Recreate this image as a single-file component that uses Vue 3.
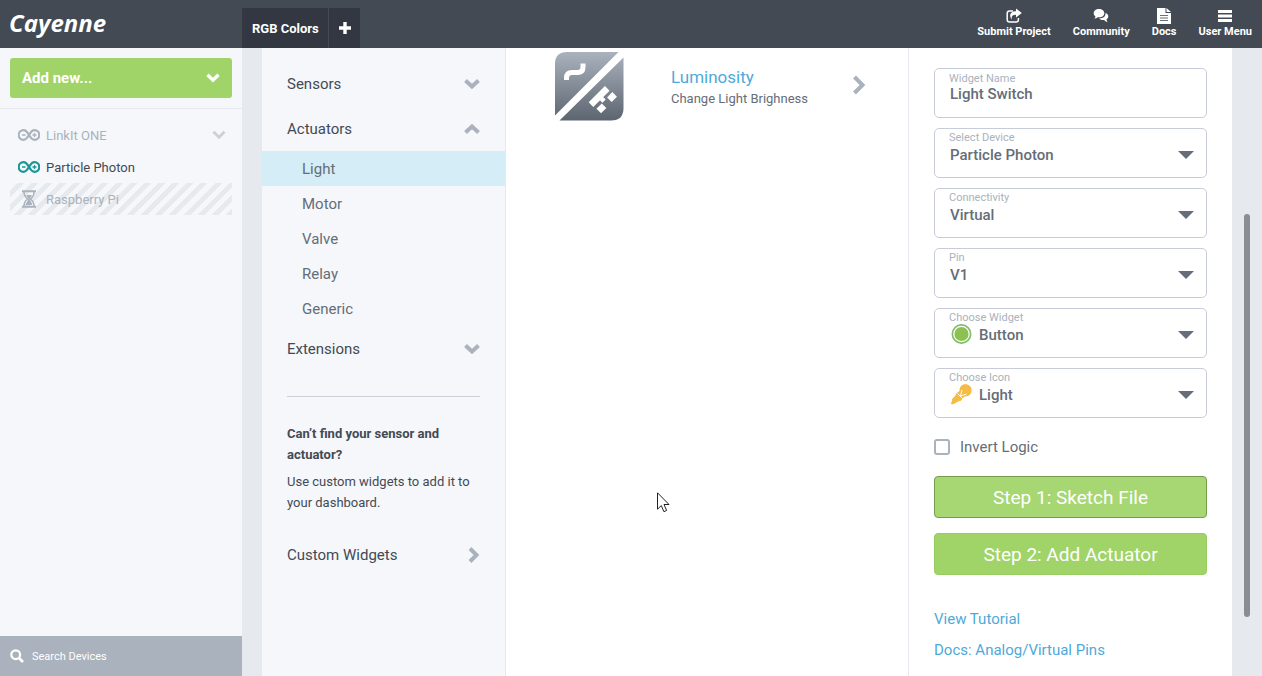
<script setup>
import { ref } from 'vue'

const devices = [
  { name: 'LinkIt ONE', icon: 'board', state: 'idle', expandable: true },
  { name: 'Particle Photon', icon: 'board', state: 'online' },
  { name: 'Raspberry Pi', icon: 'hourglass', state: 'pending' }
]
const actuators = ['Light', 'Motor', 'Valve', 'Relay', 'Generic']
const selected = ref('Light')
const widgetName = ref('Light Switch')
const invert = ref(false)
const fields = [
  { id: 'device', label: 'Select Device', options: ['Particle Photon', 'LinkIt ONE'] },
  { id: 'connectivity', label: 'Connectivity', options: ['Virtual', 'Digital'] },
  { id: 'pin', label: 'Pin', options: ['V1', 'V2'] },
  { id: 'widget', label: 'Choose Widget', options: ['Button'], icon: 'button' },
  { id: 'icon', label: 'Choose Icon', options: ['Light'], icon: 'bulb' }
]
</script>

<template>
  <div class="app">
    <header class="topbar">
      <div class="brand">Cayenne</div>
      <div class="tabs">
        <button class="tab">RGB Colors</button>
        <button class="tab add" aria-label="Add project">
          <svg width="12" height="12" viewBox="0 0 12 12"><path d="M4.3 0h3.4v4.3H12v3.4H7.7V12H4.3V7.7H0V4.3h4.3z" fill="#fff" /></svg>
        </button>
      </div>
      <nav class="links">
        <a href="#">
          <svg width="16" height="16" viewBox="0 0 16 16"><path d="M7 3H3.6Q1.2 3 1.2 5.300v6.400Q1.200 14 3.600 14h6.400q2.400 0 2.400-2.300V10" fill="none" stroke="#fff" stroke-width="1.500" /><path d="M10 .5 15.800 5 10 9.500V6.800C6.500 6.800 5.200 8 5.800 11.500 2.500 7 4.500 3.200 10 3.200z" fill="#fff" /></svg>
          <span>Submit Project</span>
        </a>
        <a href="#">
          <svg width="16" height="16" viewBox="0 0 16 16"><path d="M6 1c3.100 0 5.300 1.800 5.300 4.200S9.100 9.300 6 9.300l-1.200-.1C3.800 10 2.700 10.400 1.300 10.400c.7-.6 1.100-1.200 1.200-2C1.300 7.600.7 6.500.7 5.200.7 2.800 2.900 1 6 1z" fill="#fff" /><path d="M12.400 4.700c1.700.7 2.900 2 2.900 3.600 0 1.300-.7 2.300-1.800 3.100.1 1 .5 1.900 1.200 2.600-1.500-.1-2.700-.8-3.500-2-2 .2-3.900-.3-5-1.600 4.200 0 6.800-2.200 6.200-5.700z" fill="#fff" /></svg>
          <span>Community</span>
        </a>
        <a href="#">
          <svg width="16" height="16" viewBox="0 0 16 16"><path d="M1 0h8.500v5H15v11H1z" fill="#fff" /><path d="M10.500 0 15 4h-4.500z" fill="#fff" /><path d="M4 7.500h8M4 10h8M4 12.500h8" stroke="#69717b" stroke-width="1" /></svg>
          <span>Docs</span>
        </a>
        <a href="#">
          <svg width="16" height="16" viewBox="0 0 16 16"><path d="M1 3.500h14M1 8h14M1 12.500h14" stroke="#fff" stroke-width="3" /></svg>
          <span>User Menu</span>
        </a>
      </nav>
    </header>

    <div class="body">
      <aside class="sidebar">
        <div class="addbox">
          <button class="addnew">
            <span>Add new...</span>
            <svg width="14" height="10" viewBox="0 0 14 10"><path d="M1.500 1.800 7 7.200l5.500-5.400" fill="none" stroke="#fff" stroke-width="3.400" /></svg>
          </button>
        </div>
        <ul class="devices">
          <li v-for="d in devices" :key="d.name" :class="d.state">
            <svg v-if="d.icon === 'board'" width="22" height="12" viewBox="0 0 22 12">
              <path d="M11 6C9 2.600 7.500 1.200 5.500 1.200a4.600 4.600 0 0 0 0 9.600C7.500 10.800 9 9.400 11 6s3.500-4.800 5.500-4.800a4.600 4.600 0 0 1 0 9.600C14.500 10.800 13 9.400 11 6z" fill="none" stroke="currentColor" stroke-width="2.200" />
              <path d="M4 6h3.500M14.500 6h4M16.500 4v4" stroke="currentColor" stroke-width="1.300" />
            </svg>
            <svg v-else width="22" height="18" viewBox="0 0 22 18">
              <path d="M4 1.200h14M4 16.800h14" stroke="currentColor" stroke-width="2" />
              <path d="M6 2c0 4 1.500 5.500 3.700 7C7.500 10.500 6 12 6 16M16 2c0 4-1.500 5.500-3.700 7 2.200 1.500 3.700 3 3.700 7" fill="none" stroke="currentColor" stroke-width="1.500" />
              <path d="M8 5h6l-2.500 4L14.500 15h-7L10.500 9z" fill="currentColor" />
            </svg>
            <span>{{ d.name }}</span>
            <svg v-if="d.expandable" class="more" width="14" height="10" viewBox="0 0 14 10"><path d="M1.500 1.800 7 7.200l5.500-5.400" fill="none" stroke="#ccd1d9" stroke-width="3" /></svg>
          </li>
        </ul>
        <label class="search">
          <svg width="14" height="14" viewBox="0 0 14 14"><circle cx="5.700" cy="5.700" r="4.400" fill="none" stroke="#fff" stroke-width="2.200" /><path d="M9 9l4 4" stroke="#fff" stroke-width="2.600" /></svg>
          <input type="search" placeholder="Search Devices" aria-label="Search Devices" />
        </label>
      </aside>

      <main class="workspace">
        <nav class="catalog">
          <button class="group">Sensors
            <svg width="16" height="10" viewBox="0 0 16 10"><path d="M1.500 1.500 8 7.500l6.500-6" /></svg>
          </button>
          <button class="group">Actuators
            <svg width="16" height="10" viewBox="0 0 16 10"><path d="M1.500 8.500 8 2.500l6.500 6" /></svg>
          </button>
          <button v-for="a in actuators" :key="a" class="item" :class="{ active: a === selected }" @click="selected = a">{{ a }}</button>
          <button class="group">Extensions
            <svg width="16" height="10" viewBox="0 0 16 10"><path d="M1.500 1.500 8 7.500l6.500-6" /></svg>
          </button>
          <div class="hint">
            <strong>Can’t find your sensor and actuator?</strong>
            <p>Use custom widgets to add it to your dashboard.</p>
          </div>
          <button class="group">Custom Widgets
            <svg width="12" height="16" viewBox="0 0 12 16"><path d="M2 1.500 8.500 8 2 14.500" /></svg>
          </button>
        </nav>

        <section class="results">
          <a href="#" class="result">
            <svg width="70" height="72" viewBox="0 0 70 72">
              <defs><linearGradient id="tile" gradientUnits="userSpaceOnUse" x1="0" y1="2" x2="0" y2="70"><stop offset="0" stop-color="#aab2bd" /><stop offset="1" stop-color="#5d6570" /></linearGradient></defs>
              <path d="M1 65.500V14Q1 2 13 2h51.500z" fill="url(#tile)" />
              <path d="M69.500 7.500V58q0 12.500-12.500 12.500H5.500z" fill="url(#tile)" />
              <path d="M12.500 30v-2q0-5.500 5.500-5.500h5.500q5.500 0 5.500-5.500v-3.500" fill="none" stroke="#fff" stroke-width="5" />
              <g transform="translate(46 46.700) rotate(-45)" fill="#fff"><rect x="-12" y="-4" width="23" height="6.500" /><rect x="-2.500" y="2" width="4.500" height="4" /><rect x="-11" y="6" width="7.500" height="6.500" /><rect x="4.500" y="5.500" width="7.500" height="6.500" /></g>
            </svg>
            <div class="info">
              <h2>Luminosity</h2>
              <p>Change Light Brighness</p>
            </div>
            <svg width="14" height="20" viewBox="0 0 14 20"><path d="M2.500 2 10.500 10l-8 8" fill="none" stroke="#aab2bd" stroke-width="4" /></svg>
          </a>
        </section>

        <form class="settings" @submit.prevent>
          <div class="field name">
            <label for="name">Widget Name</label>
            <input id="name" v-model="widgetName" type="text" />
          </div>
          <div v-for="f in fields" :key="f.id" class="field">
            <label :for="f.id">{{ f.label }}</label>
            <div class="value">
              <svg v-if="f.icon === 'button'" width="24" height="22" viewBox="0 0 24 22"><circle cx="12.500" cy="10" r="10" fill="#7fbf6a" /><circle cx="12.500" cy="10" r="7.700" fill="#8cc152" stroke="#fff" stroke-width="1.200" /></svg>
              <svg v-if="f.icon === 'bulb'" width="24" height="22" viewBox="0 0 24 22"><path d="M10.500 7C10.300 3 12.800.3 16.400.3c3.600 0 6.200 2.600 6.200 6 0 3.900-2.800 6.600-7.200 6.200L11.500 17l-2 .2-3.700 2.300-3 1-.8-1 1.200-3.200L3 15l3.300-3.200.6-2z" fill="#f6bb42" /><path d="M8.500 9.500l5 5M11.500 12 13 6M11.500 12l6-2" fill="none" stroke="#fff" stroke-width="1" /></svg>
              <select :id="f.id"><option v-for="o in f.options" :key="o">{{ o }}</option></select>
              <svg class="caret" width="16" height="8" viewBox="0 0 16 8"><path d="M0 0h16L8 8z" fill="#656d78" /></svg>
            </div>
          </div>
          <label class="check"><input v-model="invert" type="checkbox" />Invert Logic</label>
          <button class="step focus" type="button">Step 1: Sketch File</button>
          <button class="step" type="submit">Step 2: Add Actuator</button>
          <div class="help">
            <a href="#">View Tutorial</a>
            <a href="#">Docs: Analog/Virtual Pins</a>
          </div>
        </form>
      </main>
      <div class="scrollbar"></div>
    </div>

    <svg class="pointer" width="13" height="21" viewBox="0 0 13 21"><path d="M.5.8v16.400l3.800-3.600 2.600 6.100 2.700-1.200L7 12.500h5z" fill="#fff" stroke="#222" stroke-width="1" /></svg>
  </div>
</template>

<style>
body { overflow: hidden; }
</style>

<style scoped>
* { box-sizing: border-box; }
.app {
  position: relative;
  display: flex;
  flex-direction: column;
  height: 100vh;
  overflow: hidden;
  background: #e6e9ed;
  color: #434a54;
  font-family: Roboto, "Open Sans", sans-serif;
  font-size: 13px;
}
button, input, select { font: inherit; color: inherit; border: 0; padding: 0; margin: 0; background: none; outline: 0; }
button { cursor: pointer; text-align: left; }
a { text-decoration: none; color: #4fa9d8; }
svg { flex: none; display: block; }
p, h2, ul { margin: 0; padding: 0; }

.topbar { flex: none; display: flex; height: 48px; background: #434a54; color: #fff; }
.brand { width: 242px; padding-left: 9px; font: italic bold 24px/46px "Open Sans", sans-serif; }
.tabs { display: flex; align-self: flex-end; height: 40px; gap: 1px; }
.tab { background: #323741; padding: 0 9px 0 10px; font-weight: 700; }
.links { display: flex; gap: 22px; margin-left: auto; padding: 8px 10px 0 0; }
.links a { display: flex; flex-direction: column; align-items: center; color: #fff; font-weight: 700; font-size: 11px; line-height: 16px; }

.body { flex: 1; display: flex; min-height: 0; }
.sidebar { flex: none; width: 242px; display: flex; flex-direction: column; background: #f5f7fa; }
.addbox { padding: 10px; border-bottom: 1px solid #e6e9ed; }
.addnew { display: flex; align-items: center; justify-content: space-between; width: 100%; height: 40px; padding: 0 12px; border-radius: 3px; background: #a0d468; color: #fff; font-weight: 700; font-size: 15px; }
.devices { flex: 1; list-style: none; padding: 10px; }
.devices li { display: flex; align-items: center; gap: 6px; height: 32px; padding: 0 6px 0 8px; color: #aab2bd; }
.devices .online { color: #434a54; }
.online svg { color: #1a9698; }
.pending { background: repeating-linear-gradient(135deg, #f5f7fa 0 5px, #e6e9ed 5px 10px); }
.more { margin-left: auto; }
.search { display: flex; align-items: center; gap: 8px; height: 40px; padding: 0 10px; background: #aab2bd; color: #fff; font-size: 11px; }
.search input { width: 100%; min-width: 0; }
.search input::placeholder { color: #fff; opacity: 1; }

.workspace { flex: 1; display: flex; min-width: 0; margin-left: 20px; background: #fff; }
.catalog { flex: none; width: 244px; padding-top: 13px; display: flex; flex-direction: column; background: #f5f7fa; border-right: 1px solid #e6e9ed; font-size: 15px; }
.group { display: flex; align-items: center; justify-content: space-between; flex: none; height: 45px; padding: 0 25px; }
.group path { fill: none; stroke: #aab2bd; stroke-width: 4; }
.item { flex: none; height: 35px; padding-left: 40px; color: #656d78; }
.item.active { background: #d4edf6; }
.hint { margin: 25px 25px 19px; padding-top: 26px; border-top: 1px solid #ccd1d9; font-size: 13px; line-height: 21px; }
.hint strong { display: block; margin-bottom: 6px; }

.results { flex: 1; min-width: 0; }
.result { display: flex; align-items: flex-start; padding: 2px 42px 0 48px; }
.info { flex: 1; padding: 15px 0 0 47px; }
.result > svg:last-child { margin-top: 25px; }
.info h2 { font-size: 17px; font-weight: 400; line-height: 24px; }
.info p { color: #656d78; line-height: 20px; }

.settings { flex: none; width: 324px; display: flex; flex-direction: column; padding: 20px 25px 0; border-left: 1px solid #e6e9ed; color: #656d78; font-size: 15px; }
.field { flex: none; height: 50px; margin-bottom: 10px; padding: 3px 14px; border: 1px solid #c8ccd8; border-radius: 5px; }
.field label { display: block; color: #aab2bd; font-size: 11px; line-height: 12px; }
.field input, .field select { width: 100%; min-width: 0; height: 20px; padding-left: 1px; appearance: none; font-weight: 500; }
.field.name { padding-top: 4px; }
.field.name input { display: block; height: 18px; }
.value { display: flex; align-items: center; gap: 5px; height: 21px; }
.caret { margin-right: -2px; }
.check { display: flex; align-items: center; gap: 10px; height: 38px; }
.check input { appearance: none; width: 16px; height: 16px; border: 2px solid #aab2bd; border-radius: 3px; }
.step { flex: none; height: 42px; margin: 10px 0 5px; border: 1px solid #97cc60; border-radius: 4px; background: #a0d468; color: #fff; text-align: center; font-size: 19px; }
.focus { border-color: #769d4c; background: #a6d772; }
.help { display: flex; flex-direction: column; gap: 7px; padding-top: 27px; line-height: 24px; }
.scrollbar { flex: none; width: 6px; height: 403px; margin: 166px 12px 0; border-radius: 3px; background: #8a8d91; }

.pointer { position: absolute; left: 657px; top: 492px; }
</style>
